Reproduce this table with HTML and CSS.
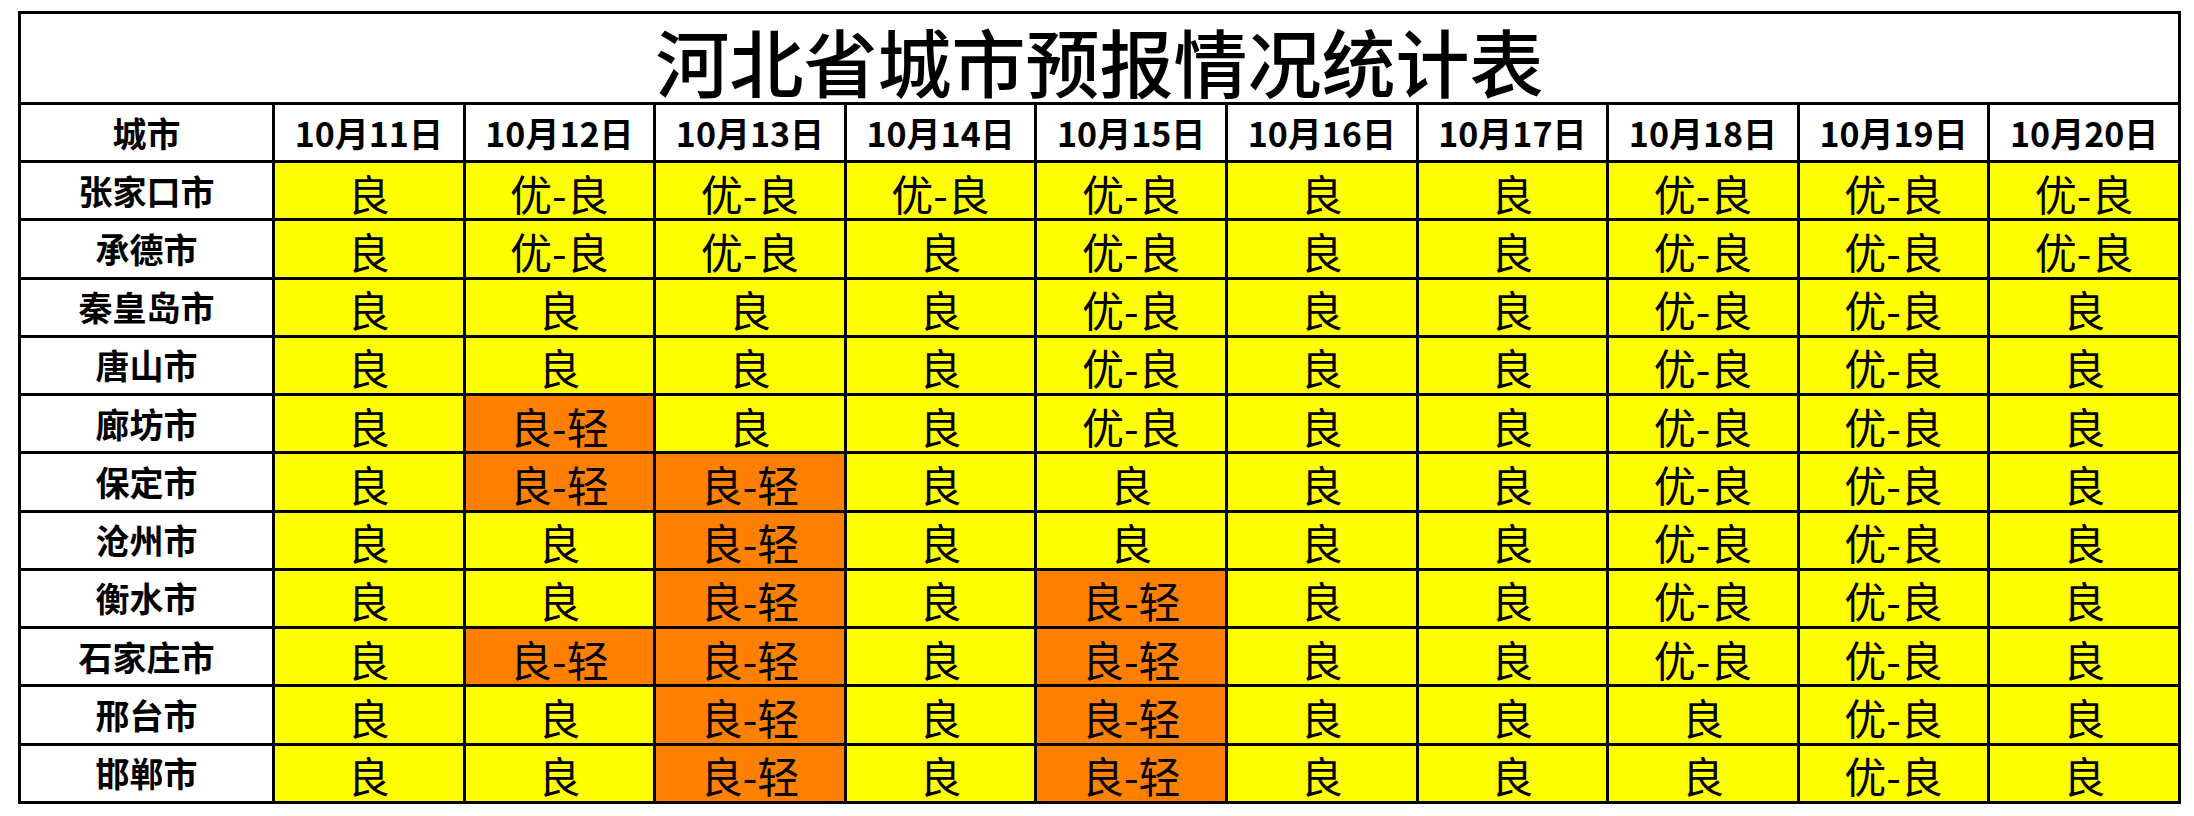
FILE: index.html
```html
<!DOCTYPE html>
<html lang="zh-CN">
<head>
<meta charset="utf-8">
<title>河北省城市预报情况统计表</title>
<link rel="stylesheet" href="styles.css">
</head>
<body>
<table class="report">
  <colgroup>
    <col class="col-city">
    <col class="col-day"><col class="col-day"><col class="col-day"><col class="col-day"><col class="col-day">
    <col class="col-day"><col class="col-day"><col class="col-day"><col class="col-day"><col class="col-day">
  </colgroup>
  <thead>
    <tr class="title-row"><th colspan="11" class="title">河北省城市预报情况统计表</th></tr>
    <tr class="head-row">
      <th>城市</th>
      <th>10月11日</th><th>10月12日</th><th>10月13日</th><th>10月14日</th><th>10月15日</th>
      <th>10月16日</th><th>10月17日</th><th>10月18日</th><th>10月19日</th><th>10月20日</th>
    </tr>
  </thead>
  <tbody>
    <tr><th>张家口市</th><td>良</td><td>优-良</td><td>优-良</td><td>优-良</td><td>优-良</td><td>良</td><td>良</td><td>优-良</td><td>优-良</td><td>优-良</td></tr>
    <tr><th>承德市</th><td>良</td><td>优-良</td><td>优-良</td><td>良</td><td>优-良</td><td>良</td><td>良</td><td>优-良</td><td>优-良</td><td>优-良</td></tr>
    <tr><th>秦皇岛市</th><td>良</td><td>良</td><td>良</td><td>良</td><td>优-良</td><td>良</td><td>良</td><td>优-良</td><td>优-良</td><td>良</td></tr>
    <tr><th>唐山市</th><td>良</td><td>良</td><td>良</td><td>良</td><td>优-良</td><td>良</td><td>良</td><td>优-良</td><td>优-良</td><td>良</td></tr>
    <tr><th>廊坊市</th><td>良</td><td class="light">良-轻</td><td>良</td><td>良</td><td>优-良</td><td>良</td><td>良</td><td>优-良</td><td>优-良</td><td>良</td></tr>
    <tr><th>保定市</th><td>良</td><td class="light">良-轻</td><td class="light">良-轻</td><td>良</td><td>良</td><td>良</td><td>良</td><td>优-良</td><td>优-良</td><td>良</td></tr>
    <tr><th>沧州市</th><td>良</td><td>良</td><td class="light">良-轻</td><td>良</td><td>良</td><td>良</td><td>良</td><td>优-良</td><td>优-良</td><td>良</td></tr>
    <tr><th>衡水市</th><td>良</td><td>良</td><td class="light">良-轻</td><td>良</td><td class="light">良-轻</td><td>良</td><td>良</td><td>优-良</td><td>优-良</td><td>良</td></tr>
    <tr><th>石家庄市</th><td>良</td><td class="light">良-轻</td><td class="light">良-轻</td><td>良</td><td class="light">良-轻</td><td>良</td><td>良</td><td>优-良</td><td>优-良</td><td>良</td></tr>
    <tr><th>邢台市</th><td>良</td><td>良</td><td class="light">良-轻</td><td>良</td><td class="light">良-轻</td><td>良</td><td>良</td><td>良</td><td>优-良</td><td>良</td></tr>
    <tr><th>邯郸市</th><td>良</td><td>良</td><td class="light">良-轻</td><td>良</td><td class="light">良-轻</td><td>良</td><td>良</td><td>良</td><td>优-良</td><td>良</td></tr>
  </tbody>
</table>
</body>
</html>
```
FILE: styles.css
```css
html, body {
  margin: 0;
  padding: 0;
  background: #ffffff;
}

body {
  padding: 11px 0 0 18px;
  font-family: "Noto Sans CJK SC", "Noto Sans", sans-serif;
  color: #000000;
}

.report {
  border-collapse: collapse;
  table-layout: fixed;
  width: 2160px;
  border: 3px solid #000;
}

.col-city { width: 254px; }
.col-day { width: 190.6px; }

.report th,
.report td {
  border: 3px solid #000;
  padding: 0;
  text-align: center;
  vertical-align: middle;
  line-height: 1;
}

.title-row { height: 91px; }

.report .title {
  font-size: 74px;
  font-weight: 500;
  padding-top: 4px;
  background: #fff;
}

.head-row { height: 58px; }

.head-row th,
.report tbody th {
  font-size: 34px;
  font-weight: 700;
  background: #fff;
}

.report tbody tr { height: 58.27px; }

.report tbody td {
  font-size: 42px;
  font-weight: 400;
  background: #ffff00;
  padding-top: 4px;
}

.report tbody td.light {
  background: #ff7f00;
}
```
